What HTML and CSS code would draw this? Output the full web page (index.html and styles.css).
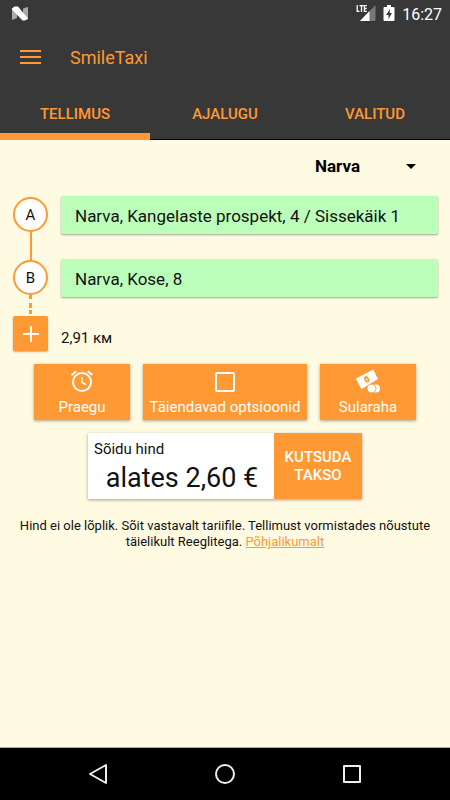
FILE: index.html
```html
<!DOCTYPE html>
<html lang="et">
<head>
<meta charset="utf-8">
<meta name="viewport" content="width=device-width, initial-scale=1">
<title>SmileTaxi</title>
<link rel="stylesheet" href="styles.css">
</head>
<body>
<header class="top">
  <div class="status">
    <svg class="status-logo" width="18" height="16" viewBox="0 0 18 16" aria-hidden="true">
      <path fill="#aaa" d="M1 2.500h5v9.500l-5 2zM12 2.500l5-1.500v12.500h-5z"/>
      <path fill="#fff" d="M1 2.500 3.500.500H7L17 12.500 14 14.500H11.500L1 3.500z"/>
    </svg>
    <div class="status-icons">
      <svg width="20" height="18" viewBox="0 0 20 18" aria-hidden="true">
        <path fill="#787878" d="M19.500 0v16H4z"/>
        <path fill="#fff" d="M13.500 6v10H4z"/>
        <path fill="#383838" d="M0 0h11v9H0z"/>
        <path fill="none" stroke="#fff" stroke-width="1.300" d="M1.200 0v6.400H3.500M3.500.700h4M5.500.700v6.300M10.800.700H8.400v5.700h2.400M8.400 3.500h2.200"/>
      </svg>
      <svg width="12" height="18" viewBox="0 0 12 18" aria-hidden="true">
        <path fill="#fff" d="M4 0h4v2h2.500q1 0 1 1v12q0 1-1 1h-9q-1 0-1-1V3q0-1 1-1H4z"/>
        <path fill="#383838" d="M7 4 3 10h2.500v4L9 8H6.700z"/>
      </svg>
      <span class="clock">16:27</span>
    </div>
  </div>
  <div class="appbar">
    <button class="menu" type="button" aria-label="Menüü">
      <svg width="21" height="14" viewBox="0 0 21 14" aria-hidden="true"><path fill="#ff9933" d="M0 0h21v2H0zM0 6h21v2H0zM0 12h21v2H0z"/></svg>
    </button>
    <h1 class="title">SmileTaxi</h1>
  </div>
  <nav class="tabs">
    <a class="tab tab-active" href="#tellimus">TELLIMUS</a>
    <a class="tab" href="#ajalugu">AJALUGU</a>
    <a class="tab" href="#valitud">VALITUD</a>
  </nav>
</header>
<main class="order" id="tellimus">
  <div class="city">
    <select class="city-select" aria-label="Linn"><option>Narva</option></select>
    <svg class="city-arrow" width="10" height="5" viewBox="0 0 10 5" aria-hidden="true"><path d="M0 0h10L5 5z"/></svg>
  </div>
  <div class="route">
    <div class="rail">
      <label class="stop" for="from">A</label>
      <span class="link"></span>
      <label class="stop" for="to">B</label>
      <svg class="dashes" width="3" height="21" viewBox="0 0 3 21" aria-hidden="true"><path fill="#ff9933" d="M0 0h3v4H0zM0 8h3v5H0zM0 15h3v4H0z"/></svg>
      <button class="add" type="button" aria-label="Lisa peatus">
        <svg width="16" height="16" viewBox="0 0 16 16" aria-hidden="true"><path fill="#fff" d="M7 0h2v7h7v2H9v7H7V9H0V7h7z"/></svg>
      </button>
    </div>
    <div class="stops">
      <input class="address" id="from" type="text" value="Narva, Kangelaste prospekt, 4 / Sissekäik 1">
      <input class="address" id="to" type="text" value="Narva, Kose, 8">
      <p class="distance">2,91 км</p>
    </div>
  </div>
  <div class="options">
    <button class="option" type="button">
      <svg width="24" height="24" viewBox="0 0 24 24" aria-hidden="true">
        <circle cx="12" cy="14" r="9" fill="none" stroke="#fff" stroke-width="2"/>
        <path fill="none" stroke="#fff" stroke-width="2" d="M1.600 7.100 6.200 3.300M17.800 3.300l4.600 3.800"/>
        <path fill="none" stroke="#fff" stroke-width="1.600" d="M11.800 9v5.300l4.200 2.500"/>
      </svg>
      <span>Praegu</span>
    </button>
    <button class="option option-wide" type="button">
      <svg width="24" height="24" viewBox="0 0 24 24" aria-hidden="true"><rect x="3" y="5" width="18" height="18" rx="1" fill="none" stroke="#fff" stroke-width="2"/></svg>
      <span>Täiendavad optsioonid</span>
    </button>
    <button class="option" type="button">
      <svg class="cash" width="26" height="24" viewBox="0 0 26 24" aria-hidden="true">
        <path fill="#fff" d="M.800 10.500 18.300 1.500 23 11 6.500 21.300z"/>
        <ellipse cx="11.700" cy="11.300" rx="2.300" ry="3.400" fill="#ff9933" transform="rotate(-28 11.700 11.300)"/>
        <path fill="none" stroke="#fff" d="M11 10l1.500 3"/>
        <circle cx="21" cy="20.500" r="4" fill="#fff"/>
        <circle cx="16.500" cy="20.500" r="4.500" fill="#fff" stroke="#ff9933"/>
      </svg>
      <span>Sularaha</span>
    </button>
  </div>
  <div class="fare">
    <div class="price">
      <span class="price-label">Sõidu hind</span>
      <span class="price-value">alates 2,60 €</span>
    </div>
    <button class="call" type="button">KUTSUDA TAKSO</button>
  </div>
  <p class="terms">Hind ei ole lõplik. Sõit vastavalt tariifile. Tellimust vormistades nõustute täielikult Reeglitega. <a class="terms-link" href="#reeglid">Põhjalikumalt</a></p>
</main>
<footer class="navbar">
  <button class="nav" type="button" aria-label="Tagasi">
    <svg width="22" height="22" viewBox="0 0 22 22" aria-hidden="true"><path fill="none" stroke="#eee" stroke-width="2" stroke-linejoin="round" d="M18 2v18L2 11z"/></svg>
  </button>
  <button class="nav" type="button" aria-label="Avaleht">
    <svg width="22" height="22" viewBox="0 0 22 22" aria-hidden="true"><circle cx="11" cy="11" r="9" fill="none" stroke="#eee" stroke-width="2"/></svg>
  </button>
  <button class="nav" type="button" aria-label="Hiljutised">
    <svg width="22" height="22" viewBox="0 0 22 22" aria-hidden="true"><rect x="4" y="3" width="16" height="16" fill="none" stroke="#eee" stroke-width="2" stroke-linejoin="round"/></svg>
  </button>
</footer>
</body>
</html>
```
FILE: styles.css
```css
* {
  box-sizing: border-box;
}

body {
  margin: 0;
  min-height: 100vh;
  display: flex;
  flex-direction: column;
  background: #fffae2;
  color: #111;
  font-family: Roboto, "Liberation Sans", sans-serif;
  font-size: 15px;
}

button,
input,
select {
  margin: 0;
  padding: 0;
  border: 0;
  font: inherit;
}

p,
h1 {
  margin: 0;
}

svg {
  display: block;
}

.top {
  background: #383838;
  color: #ff9933;
}

.status {
  display: flex;
  justify-content: space-between;
  align-items: center;
  height: 28px;
  padding: 0 8px 0 11px;
}

.status-icons {
  display: flex;
  align-items: center;
  gap: 7px;
  color: #fff;
}

.clock {
  font-size: 16px;
}

.appbar {
  display: flex;
  align-items: center;
  gap: 29px;
  height: 58px;
  padding: 0 20px;
}

.menu {
  background: none;
}

.title {
  font-size: 18px;
  font-weight: 400;
}

.tabs {
  display: flex;
}

.tab {
  flex: 1;
  height: 54px;
  border-bottom: 1px solid #000;
  color: #ff9933;
  font-size: 15px;
  font-weight: 500;
  line-height: 56px;
  text-align: center;
  text-decoration: none;
}

.tab-active {
  border-bottom: 7px solid #ff9933;
}

.order {
  flex: 1;
  padding: 8px 12px;
}

.city {
  display: flex;
  justify-content: flex-end;
  align-items: center;
  height: 36px;
  padding-right: 22px;
}

.city-select {
  width: 101px;
  margin-right: -10px;
  appearance: none;
  background: none;
  color: #000;
  font-size: 17px;
  font-weight: 700;
}

.city-arrow {
  pointer-events: none;
}

.route {
  display: flex;
  gap: 13px;
  margin-top: 12px;
  padding-left: 1px;
}

.rail {
  display: flex;
  flex-direction: column;
  align-items: center;
  padding-top: 1px;
}

.stop {
  width: 35px;
  height: 35px;
  border: 2px solid #ff9933;
  border-radius: 50%;
  background: #fff;
  line-height: 33px;
  text-align: center;
}

.link {
  width: 2px;
  height: 28px;
  background: #ff9933;
}

.add {
  display: grid;
  place-items: center;
  width: 35px;
  height: 35px;
  border-radius: 2px;
  background: #ff9933;
  box-shadow: 0 1px 2px rgba(0, 0, 0, 0.3);
}

.stops {
  flex: 1;
  display: flex;
  flex-direction: column;
}

.address {
  width: 100%;
  height: 38px;
  margin-bottom: 25px;
  padding: 1px 14px 0;
  border-radius: 2px;
  background: #bbffbb;
  box-shadow: 0 1px 2px rgba(0, 0, 0, 0.35);
  color: #111;
  font-size: 17px;
}

.distance {
  margin-top: 6px;
  line-height: 20px;
}

.options {
  display: flex;
  justify-content: center;
  gap: 13px;
  margin-top: 13px;
}

.option {
  display: flex;
  flex-direction: column;
  align-items: center;
  gap: 4px;
  width: 96px;
  height: 56px;
  padding-top: 4px;
  background: #ff9933;
  box-shadow: 0 1px 3px rgba(0, 0, 0, 0.35);
  color: #fff;
  line-height: 22px;
  white-space: nowrap;
}

.option-wide {
  width: 164px;
}

.cash {
  overflow: visible;
}

.fare {
  display: flex;
  width: 274px;
  min-height: 66px;
  margin: 13px auto 0;
  background: #fff;
  box-shadow: 0 1px 3px rgba(0, 0, 0, 0.35);
}

.price {
  flex: 1;
  display: flex;
  flex-direction: column;
  padding: 5px 4px 3px 6px;
}

.price-label {
  line-height: 22px;
}

.price-value {
  font-size: 27px;
  line-height: 36px;
  text-align: center;
}

.call {
  width: 88px;
  padding: 0 8px;
  background: #ff9933;
  color: #fff;
  font-weight: 500;
  line-height: 18px;
}

.terms {
  margin-top: 19px;
  font-size: 13px;
  line-height: 16px;
  text-align: center;
}

.terms-link {
  color: #ff9933;
}

.navbar {
  display: flex;
  justify-content: center;
  align-items: center;
  gap: 104px;
  height: 53px;
  border-top: 1px solid #b3af9e;
  background: #000;
}

.nav {
  background: none;
}
```
